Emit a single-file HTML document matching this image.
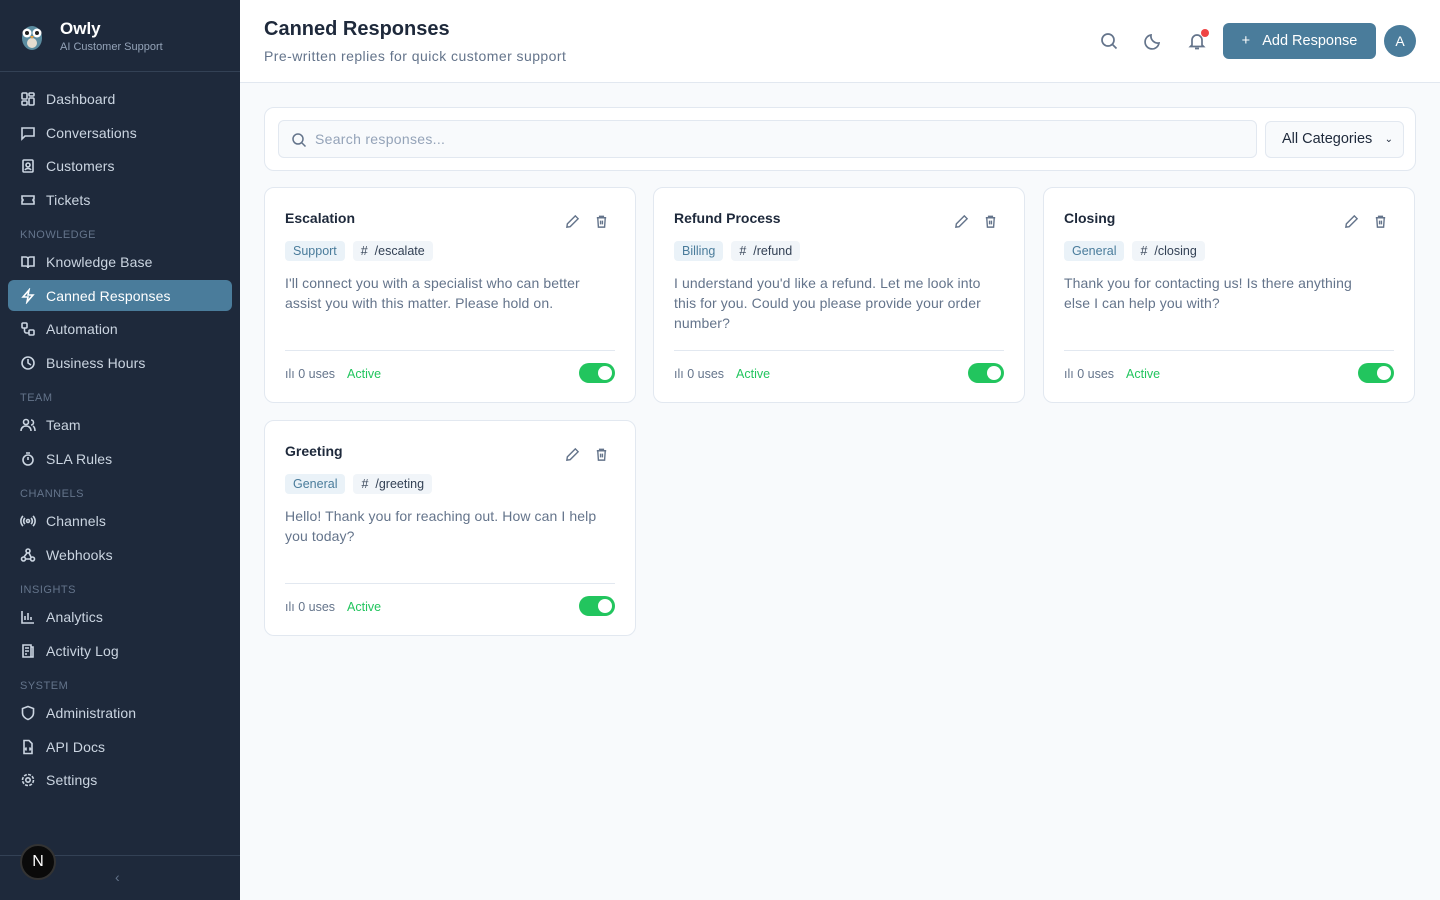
<!DOCTYPE html>
<html><head><meta charset="utf-8"><style>
*{box-sizing:border-box;margin:0;padding:0}
body{width:1440px;height:900px;font-family:"Liberation Sans",sans-serif;background:#f8fafc;position:relative;overflow:hidden;color:#1e293b}
.sb{position:absolute;left:0;top:0;width:240px;height:900px;background:#1e293b}
.sb .hd{height:72px;border-bottom:1px solid #334155;position:relative}
.nav{position:absolute;left:8px;width:224px;height:31px;display:flex;align-items:center;padding-left:12px;color:#cbd5e1;font-size:14px;border-radius:6px;letter-spacing:.1px}
.nav svg{width:16px;height:16px;margin-right:10px;stroke:#cbd5e1;fill:none;stroke-width:1.6}
.nav.act{background:#4a7c9b;color:#fff}
.nav.act svg{stroke:#fff}
.sec{position:absolute;left:20px;font-size:11px;color:#64748b;letter-spacing:.5px}
.top{position:absolute;left:240px;top:0;right:0;height:83px;background:#fff;border-bottom:1px solid #e2e8f0}
.card{position:absolute;width:372px;height:216px;background:#fff;border:1px solid #e2e8f0;border-radius:10px;padding:20px}
.card h3{font-size:14px;font-weight:bold;color:#1e293b;margin-top:2px}
.acts{position:absolute;right:26px;top:26px;display:flex;gap:14px}
.acts svg{width:15px;height:15px;stroke:#64748b;fill:none;stroke-width:1.5}
.tags{display:flex;gap:8px;margin-top:15px}
.tag{font-size:12.5px;padding:0 8px;height:20px;line-height:20px;border-radius:4px}
.t1{background:#eaf2f8;color:#4a7c9b}.t2{background:#f1f5f9;color:#334155}
.txt{font-size:14px;color:#64748b;line-height:20px;margin-top:12px;height:60px;width:318px;letter-spacing:.1px}
.ft{position:absolute;left:20px;right:20px;top:162px;border-top:1px solid #e2e8f0;height:46px;display:flex;align-items:center;font-size:12.5px;color:#64748b}
.ft .a{color:#22c55e;margin-left:12px}
.tg{position:absolute;right:0;top:12px;width:36px;height:20px;border-radius:10px;background:#22c55e}
.tg:after{content:"";position:absolute;right:3px;top:3px;width:14px;height:14px;border-radius:50%;background:#fff}
</style></head><body>
<div class="sb">
 <div class="hd">
  <svg style="position:absolute;left:18px;top:20px" width="28" height="32" viewBox="0 0 28 32"><ellipse cx="14" cy="18" rx="10" ry="12" fill="#5b8ca0"/><circle cx="9" cy="13" r="4.5" fill="#fff"/><circle cx="19" cy="13" r="4.5" fill="#fff"/><circle cx="9" cy="13" r="2" fill="#222"/><circle cx="19" cy="13" r="2" fill="#222"/><ellipse cx="14" cy="23" rx="5" ry="5" fill="#e6ddd0"/><path d="M12 16l2 3 2-3z" fill="#e8a040"/></svg>
  <div style="position:absolute;left:60px;top:19px;color:#fff;font-weight:bold;font-size:17px">Owly</div>
  <div style="position:absolute;left:60px;top:41px;color:#94a3b8;font-size:11px">AI Customer Support</div>
 </div>
 <div class="nav" style="top:83px"><svg viewBox="0 0 16 16"><rect x="2" y="2" width="5" height="6" rx="1"/><rect x="9" y="2" width="5" height="3" rx="1"/><rect x="9" y="7" width="5" height="7" rx="1"/><rect x="2" y="10" width="5" height="4" rx="1"/></svg>Dashboard</div>
 <div class="nav" style="top:117px"><svg viewBox="0 0 16 16"><path d="M2 3h12v8H5l-3 3z"/></svg>Conversations</div>
 <div class="nav" style="top:150px"><svg viewBox="0 0 16 16"><rect x="3" y="2" width="10" height="12" rx="1"/><circle cx="8" cy="7" r="2"/><path d="M5 12c1-2 5-2 6 0"/></svg>Customers</div>
 <div class="nav" style="top:184px"><svg viewBox="0 0 16 16"><path d="M2 4h12v3a1 1 0 000 2v3H2V9a1 1 0 000-2z"/></svg>Tickets</div>
 <div class="sec" style="top:229px">KNOWLEDGE</div>
 <div class="nav" style="top:246px"><svg viewBox="0 0 16 16"><path d="M2 3h4a2 2 0 012 2v9a2 2 0 00-2-2H2zM14 3h-4a2 2 0 00-2 2v9a2 2 0 012-2h4z"/></svg>Knowledge Base</div>
 <div class="nav act" style="top:280px"><svg viewBox="0 0 16 16"><path d="M9 2L3 9h5l-1 5 6-7H8z"/></svg>Canned Responses</div>
 <div class="nav" style="top:313px"><svg viewBox="0 0 16 16"><rect x="2" y="2" width="5" height="5" rx="1"/><rect x="9" y="9" width="5" height="5" rx="1"/><path d="M4.5 7v3a2 2 0 002 2H9"/></svg>Automation</div>
 <div class="nav" style="top:347px"><svg viewBox="0 0 16 16"><circle cx="8" cy="8" r="6"/><path d="M8 4v4l3 2"/></svg>Business Hours</div>
 <div class="sec" style="top:392px">TEAM</div>
 <div class="nav" style="top:409px"><svg viewBox="0 0 16 16"><circle cx="6" cy="5" r="2.5"/><path d="M1 14c0-3 2-5 5-5s5 2 5 5M11 3a2.5 2.5 0 010 5M13 9c1.5 1 2 3 2 5"/></svg>Team</div>
 <div class="nav" style="top:443px"><svg viewBox="0 0 16 16"><circle cx="8" cy="9" r="5"/><path d="M6 2h4M8 9V6"/></svg>SLA Rules</div>
 <div class="sec" style="top:488px">CHANNELS</div>
 <div class="nav" style="top:505px"><svg viewBox="0 0 16 16"><circle cx="8" cy="8" r="1.5"/><path d="M5 5a4 4 0 000 6M11 5a4 4 0 010 6M3 3a7 7 0 000 10M13 3a7 7 0 010 10"/></svg>Channels</div>
 <div class="nav" style="top:539px"><svg viewBox="0 0 16 16"><circle cx="8" cy="4" r="2"/><circle cx="3.5" cy="12" r="2"/><circle cx="12.5" cy="12" r="2"/><path d="M7 6l-3 4M9 6l2 4M5.5 12h5"/></svg>Webhooks</div>
 <div class="sec" style="top:584px">INSIGHTS</div>
 <div class="nav" style="top:601px"><svg viewBox="0 0 16 16"><path d="M2 2v12h12M5 11V7M8 11V4M11 11V8"/></svg>Analytics</div>
 <div class="nav" style="top:635px"><svg viewBox="0 0 16 16"><path d="M3 2h8v12H3zM5 5h4M5 8h4M5 11h2M11 4h2v10H5"/></svg>Activity Log</div>
 <div class="sec" style="top:680px">SYSTEM</div>
 <div class="nav" style="top:697px"><svg viewBox="0 0 16 16"><path d="M8 1.5l5.5 2v4.5c0 3-2.5 5.5-5.5 6.5C5 13.5 2.5 11 2.5 8V3.5z"/></svg>Administration</div>
 <div class="nav" style="top:731px"><svg viewBox="0 0 16 16"><path d="M4 1.5h5l3 3v10H4zM6.5 8.5l-1 1.5 1 1.5M9.5 8.5l1 1.5-1 1.5"/></svg>API Docs</div>
 <div class="nav" style="top:764px"><svg viewBox="0 0 16 16"><circle cx="8" cy="8" r="2.2"/><circle cx="8" cy="8" r="5.5" stroke-dasharray="3 1.3"/></svg>Settings</div>
 <div style="position:absolute;left:0;top:855px;width:240px;border-top:1px solid #334155"></div>
 <div style="position:absolute;left:20px;top:844px;width:36px;height:36px;border-radius:50%;background:#0a0a0a;border:2px solid #333;color:#fff;font-size:16px;display:flex;align-items:center;justify-content:center">N</div>
 <div style="position:absolute;left:115px;top:869px;color:#64748b;font-size:14px">‹</div>
</div>
<div class="top">
 <div style="position:absolute;left:24px;top:18px;font-size:20px;font-weight:bold;color:#1e293b">Canned Responses</div>
 <div style="position:absolute;left:24px;top:48px;font-size:14px;color:#64748b;letter-spacing:.45px">Pre-written replies for quick customer support</div>
 <svg style="position:absolute;left:859px;top:31px" width="20" height="20" viewBox="0 0 20 20" fill="none" stroke="#64748b" stroke-width="1.7"><circle cx="9" cy="9" r="6"/><path d="M13.5 13.5l4 4"/></svg>
 <svg style="position:absolute;left:903px;top:31px" width="20" height="20" viewBox="0 0 20 20" fill="none" stroke="#64748b" stroke-width="1.7"><path d="M16 12A7 7 0 018 4a7 7 0 108 8z"/></svg>
 <svg style="position:absolute;left:947px;top:31px" width="20" height="20" viewBox="0 0 20 20" fill="none" stroke="#64748b" stroke-width="1.7"><path d="M5 14V9a5 5 0 0110 0v5l1.5 1.5h-13zM8 17.5h4"/></svg>
 <div style="position:absolute;left:961px;top:29px;width:8px;height:8px;border-radius:50%;background:#ef4444"></div>
 <div style="position:absolute;left:983px;top:23px;width:153px;height:36px;border-radius:6px;background:#4a7c9b;color:#fff;font-size:14.5px;display:flex;align-items:center;justify-content:center">+&nbsp;&nbsp;&nbsp;Add Response</div>
 <div style="position:absolute;left:1144px;top:25px;width:32px;height:32px;border-radius:50%;background:#4a7c9b;color:#fff;font-size:14px;display:flex;align-items:center;justify-content:center">A</div>
</div>
<div style="position:absolute;left:264px;top:107px;width:1152px;height:64px;background:#fff;border:1px solid #e2e8f0;border-radius:10px">
 <div style="position:absolute;left:13px;top:12px;width:979px;height:38px;background:#f8fafc;border:1px solid #e2e8f0;border-radius:6px;color:#94a3b8;font-size:14px;line-height:36px;padding-left:36px;letter-spacing:.3px">Search responses...
  <svg style="position:absolute;left:12px;top:11px" width="16" height="16" viewBox="0 0 16 16" fill="none" stroke="#64748b" stroke-width="1.5"><circle cx="7" cy="7" r="5"/><path d="M11 11l3.5 3.5"/></svg></div>
 <div style="position:absolute;left:1000px;top:13px;width:139px;height:37px;background:#f8fafc;border:1px solid #e2e8f0;border-radius:6px;color:#1e293b;font-size:14.5px;line-height:35px;padding-left:16px">All Categories<span style="position:absolute;right:10px;font-size:10px">&#8964;</span></div>
</div>

<div class="card" style="left:264px;top:187px"><h3>Escalation</h3><div class="acts"><svg viewBox="0 0 16 16"><path d="M11 2l3 3-8.5 8.5L2 14l.5-3.5z"/></svg><svg viewBox="0 0 16 16"><path d="M3 4h10M6 4V2.5h4V4M4 4l.7 10h6.6L12 4M7 7v4M9 7v4"/></svg></div><div class="tags"><span class="tag t1">Support</span><span class="tag t2">#&nbsp; /escalate</span></div><div class="txt">I'll connect you with a specialist who can better assist you with this matter. Please hold on.</div><div class="ft"><span>ılı 0 uses</span><span class="a">Active</span><div class="tg"></div></div></div>
<div class="card" style="left:653px;top:187px"><h3>Refund Process</h3><div class="acts"><svg viewBox="0 0 16 16"><path d="M11 2l3 3-8.5 8.5L2 14l.5-3.5z"/></svg><svg viewBox="0 0 16 16"><path d="M3 4h10M6 4V2.5h4V4M4 4l.7 10h6.6L12 4M7 7v4M9 7v4"/></svg></div><div class="tags"><span class="tag t1">Billing</span><span class="tag t2">#&nbsp; /refund</span></div><div class="txt">I understand you'd like a refund. Let me look into this for you. Could you please provide your order number?</div><div class="ft"><span>ılı 0 uses</span><span class="a">Active</span><div class="tg"></div></div></div>
<div class="card" style="left:1043px;top:187px"><h3>Closing</h3><div class="acts"><svg viewBox="0 0 16 16"><path d="M11 2l3 3-8.5 8.5L2 14l.5-3.5z"/></svg><svg viewBox="0 0 16 16"><path d="M3 4h10M6 4V2.5h4V4M4 4l.7 10h6.6L12 4M7 7v4M9 7v4"/></svg></div><div class="tags"><span class="tag t1">General</span><span class="tag t2">#&nbsp; /closing</span></div><div class="txt" style="width:300px">Thank you for contacting us! Is there anything else I can help you with?</div><div class="ft"><span>ılı 0 uses</span><span class="a">Active</span><div class="tg"></div></div></div>
<div class="card" style="left:264px;top:420px"><h3>Greeting</h3><div class="acts"><svg viewBox="0 0 16 16"><path d="M11 2l3 3-8.5 8.5L2 14l.5-3.5z"/></svg><svg viewBox="0 0 16 16"><path d="M3 4h10M6 4V2.5h4V4M4 4l.7 10h6.6L12 4M7 7v4M9 7v4"/></svg></div><div class="tags"><span class="tag t1">General</span><span class="tag t2">#&nbsp; /greeting</span></div><div class="txt">Hello! Thank you for reaching out. How can I help you today?</div><div class="ft"><span>ılı 0 uses</span><span class="a">Active</span><div class="tg"></div></div></div>
</body></html>
